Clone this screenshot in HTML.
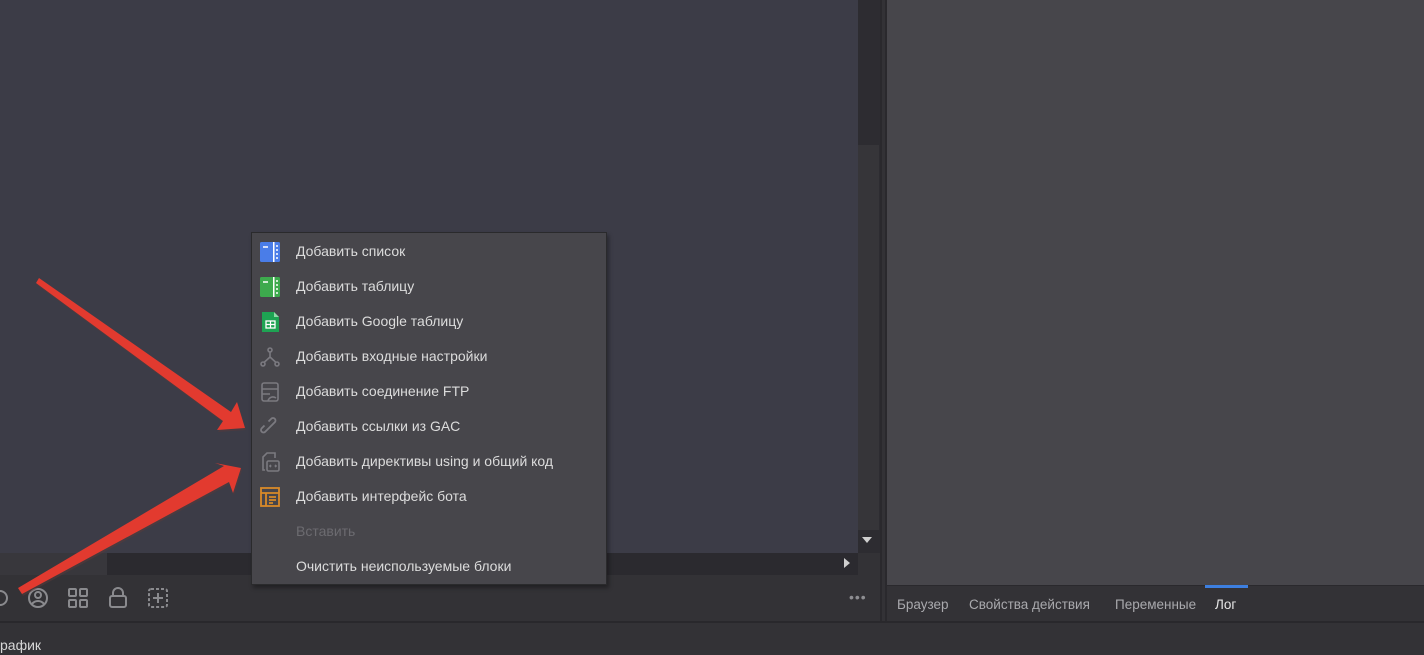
<!DOCTYPE html>
<html><head><meta charset="utf-8"><style>
*{margin:0;padding:0;box-sizing:border-box}
body{width:1424px;height:655px;overflow:hidden;background:#333236;position:relative;font-family:"Liberation Sans","DejaVu Sans",sans-serif}
.a{position:absolute}
.menu{left:251px;top:232px;width:356px;height:353px;background:#47464b;border:1px solid #2a2a2c;box-shadow:2px 3px 4px rgba(0,0,0,.35)}
.it{position:absolute;left:44px;font-size:14px;color:#dcdcdc;white-space:nowrap}
.ic{position:absolute;left:8px;width:20px;height:20px}
.tab{position:absolute;top:597px;font-size:13.5px;color:#a9a9ad}
</style></head><body>
<div class="a" style="left:0;top:0;width:858px;height:553px;background:#3c3c47"></div>
<div class="a" style="left:858px;top:0;width:22px;height:553px;background:#2d2c31"></div>
<div class="a" style="left:858px;top:145px;width:21px;height:385px;background:#363539"></div>
<div class="a" style="left:862px;top:537px;width:0;height:0;border-left:5px solid transparent;border-right:5px solid transparent;border-top:6px solid #cfcfcf"></div>
<div class="a" style="left:0;top:553px;width:858px;height:22px;background:#2b2a2f"></div>
<div class="a" style="left:0;top:553px;width:107px;height:22px;background:#38373c"></div>
<div class="a" style="left:844px;top:558px;width:0;height:0;border-top:5px solid transparent;border-bottom:5px solid transparent;border-left:6px solid #cfcfcf"></div>
<div class="a" style="left:880px;top:0;width:2px;height:622px;background:#2a292d"></div>
<div class="a" style="left:885px;top:0;width:2px;height:622px;background:#2a292d"></div>
<div class="a" style="left:887px;top:0;width:537px;height:585px;background:#47464b"></div>
<div class="a" style="left:887px;top:585px;width:537px;height:1px;background:#2a292d"></div>
<div class="a" style="left:0;top:621px;width:1424px;height:2px;background:#29282c"></div>
<div class="a" style="left:1205px;top:585px;width:43px;height:3px;background:#3d7fe0"></div>
<div class="tab" style="left:897px">Браузер</div>
<div class="tab" style="left:969px">Свойства действия</div>
<div class="tab" style="left:1115px">Переменные</div>
<div class="tab" style="left:1215px;color:#e8e8e8">Лог</div>
<div class="a" style="left:849px;top:589px;color:#8e8e92;font-size:14px;letter-spacing:1px">•••</div>
<div class="a" style="left:0;top:637px;color:#d8d8d8;font-size:14px">рафик</div>
<svg class="a" style="left:0;top:580px" width="180" height="40" fill="none" stroke="#8a8a8e" stroke-width="2">
<circle cx="0" cy="18" r="7"/>
<circle cx="38" cy="18" r="9"/><circle cx="38" cy="15" r="3"/><path d="M32 24c3-4 9-4 12 0"/>
<rect x="69" y="9" width="7" height="7" rx="1"/><rect x="80" y="9" width="7" height="7" rx="1"/><rect x="69" y="20" width="7" height="7" rx="1"/><rect x="80" y="20" width="7" height="7" rx="1"/>
<path d="M113 16v-3a5 5 0 0 1 10 0v3"/><rect x="110" y="16" width="16" height="11" rx="2"/>
<rect x="149" y="9" width="18" height="18" rx="2" stroke-dasharray="3 2"/><path d="M158 13v10M153 18h10"/>
</svg>
<div class="a menu">
<svg class="ic" style="top:9px" viewBox="0 0 20 20"><rect x="0" y="0" width="20" height="20" rx="1.5" fill="#4a7de8"/><rect x="13" y="0" width="1.5" height="20" fill="#fff"/><path d="M3 5h5M16 4h2M16 8h2M16 12h2M16 16h2" stroke="#fff" stroke-width="1.5"/></svg>
<div class="it" style="top:10px">Добавить список</div>
<svg class="ic" style="top:44px" viewBox="0 0 20 20"><rect width="20" height="20" rx="1.5" fill="#3daa4d"/><rect x="13" y="0" width="1.5" height="20" fill="#fff"/><path d="M3 5h5M16 4h2M16 8h2M16 12h2M16 16h2" stroke="#fff" stroke-width="1.5"/></svg>
<div class="it" style="top:45px">Добавить таблицу</div>
<svg class="ic" style="top:79px" viewBox="0 0 20 20"><path d="M2 0h12l5 5v15H2z" fill="#1ea353"/><path d="M14 0v5h5" fill="#8fd9a8"/><rect x="6" y="9" width="9" height="7" fill="none" stroke="#fff" stroke-width="1.3"/><path d="M6 12.5h9M10.5 9v7" stroke="#fff" stroke-width="1.2"/></svg>
<div class="it" style="top:80px">Добавить Google таблицу</div>
<svg class="ic" style="top:114px" viewBox="0 0 20 20" fill="none" stroke="#7b7a80" stroke-width="1.6"><circle cx="10" cy="3" r="2"/><circle cx="3" cy="17" r="2"/><circle cx="17" cy="17" r="2"/><path d="M10 5v5M10 10L4 15.5M10 10l6 5.5"/></svg>
<div class="it" style="top:115px">Добавить входные настройки</div>
<svg class="ic" style="top:149px" viewBox="0 0 20 20" fill="none" stroke="#7b7a80" stroke-width="1.6"><rect x="2" y="1" width="16" height="18" rx="2"/><path d="M2 7h16M2 12h8M8 19c1-4 5-5 8-3"/></svg>
<div class="it" style="top:150px">Добавить соединение FTP</div>
<svg class="ic" style="top:184px" viewBox="0 0 20 20" fill="none" stroke="#7b7a80" stroke-width="1.8"><path d="M8 12l-3 3a2.5 2.5 0 0 1-3.5-3.5l3-3M12 8l3-3a2.5 2.5 0 0 0-3.5-3.5l-3 3M7 13l6-6"/></svg>
<div class="it" style="top:185px">Добавить ссылки из GAC</div>
<svg class="ic" style="top:219px" viewBox="0 0 20 20" fill="none" stroke="#7b7a80" stroke-width="1.6"><path d="M5 18H3V5l4-4h8v5"/><rect x="7" y="9" width="12" height="10" rx="1.5"/><path d="M11 13l-1 1 1 1M15 13l1 1-1 1"/></svg>
<div class="it" style="top:220px">Добавить директивы using и общий код</div>
<svg class="ic" style="top:254px" viewBox="0 0 20 20" fill="none" stroke="#d98a28" stroke-width="1.8"><rect x="1" y="1" width="18" height="18"/><path d="M1 6h18M6 6v13M9 10h7M9 13h7M9 16h4"/></svg>
<div class="it" style="top:255px">Добавить интерфейс бота</div>
<div class="it" style="top:290px;color:#6c6b70">Вставить</div>
<div class="it" style="top:325px">Очистить неиспользуемые блоки</div>
</div>
<svg class="a" style="left:0;top:0" width="260" height="620">
<g fill="#5a3a3a" opacity=".5" transform="translate(1,2)">
<path d="M39 278 L231 412 L237 402 L245 428 L217 430 L223 421 L36 283Z"/>
<path d="M18 588 L224 466 L215 463 L241 468 L233 493 L229 482 L22 594Z"/>
</g>
<g fill="#e23a2f">
<path d="M39 278 L231 412 L237 402 L245 428 L217 430 L223 421 L36 283Z"/>
<path d="M18 588 L224 466 L215 463 L241 468 L233 493 L229 482 L22 594Z"/>
</g>
</svg>
</body></html>
